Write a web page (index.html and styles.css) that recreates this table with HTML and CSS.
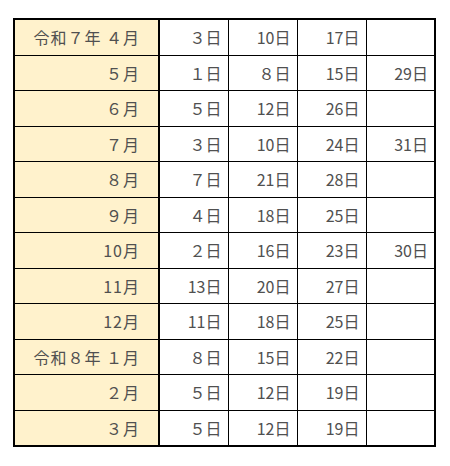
FILE: index.html
```html
<!DOCTYPE html>
<html lang="ja">
<head>
<meta charset="utf-8">
<link rel="stylesheet" href="styles.css">
</head>
<body>
<table class="sched">
  <colgroup>
    <col class="c-month"><col class="c-day"><col class="c-day"><col class="c-day"><col class="c-day">
  </colgroup>
  <tbody>
    <tr><th>令和７年&nbsp;４月</th><td>３日</td><td>10日</td><td>17日</td><td></td></tr>
    <tr><th>５月</th><td>１日</td><td>８日</td><td>15日</td><td>29日</td></tr>
    <tr><th>６月</th><td>５日</td><td>12日</td><td>26日</td><td></td></tr>
    <tr><th>７月</th><td>３日</td><td>10日</td><td>24日</td><td>31日</td></tr>
    <tr><th>８月</th><td>７日</td><td>21日</td><td>28日</td><td></td></tr>
    <tr><th>９月</th><td>４日</td><td>18日</td><td>25日</td><td></td></tr>
    <tr><th>10月</th><td>２日</td><td>16日</td><td>23日</td><td>30日</td></tr>
    <tr><th>11月</th><td>13日</td><td>20日</td><td>27日</td><td></td></tr>
    <tr><th>12月</th><td>11日</td><td>18日</td><td>25日</td><td></td></tr>
    <tr><th>令和８年&nbsp;１月</th><td>８日</td><td>15日</td><td>22日</td><td></td></tr>
    <tr><th>２月</th><td>５日</td><td>12日</td><td>19日</td><td></td></tr>
    <tr><th>３月</th><td>５日</td><td>12日</td><td>19日</td><td></td></tr>
  </tbody>
</table>
</body>
</html>
```
FILE: styles.css
```css
html, body {
  margin: 0;
  padding: 0;
  background: #fff;
}
body {
  padding: 18px 0 0 13px;
  font-family: "Noto Sans CJK JP", "Noto Sans", sans-serif;
  font-size: 16px;
  color: #505050;
}
.sched {
  border-collapse: collapse;
  table-layout: fixed;
  border: 2px solid #000;
}
.c-month { width: 145px; }
.c-day { width: 69px; }
.sched th, .sched td {
  height: 34.5px;
  padding: 0 6px 0 0;
  border: 1px solid #000;
  text-align: right;
  font-weight: normal;
  white-space: nowrap;
  line-height: 1;
}
.sched th {
  background: #fff2cc;
  padding-right: 18px;
  letter-spacing: 1px;
  border-right: 2px solid #000;
}
```
